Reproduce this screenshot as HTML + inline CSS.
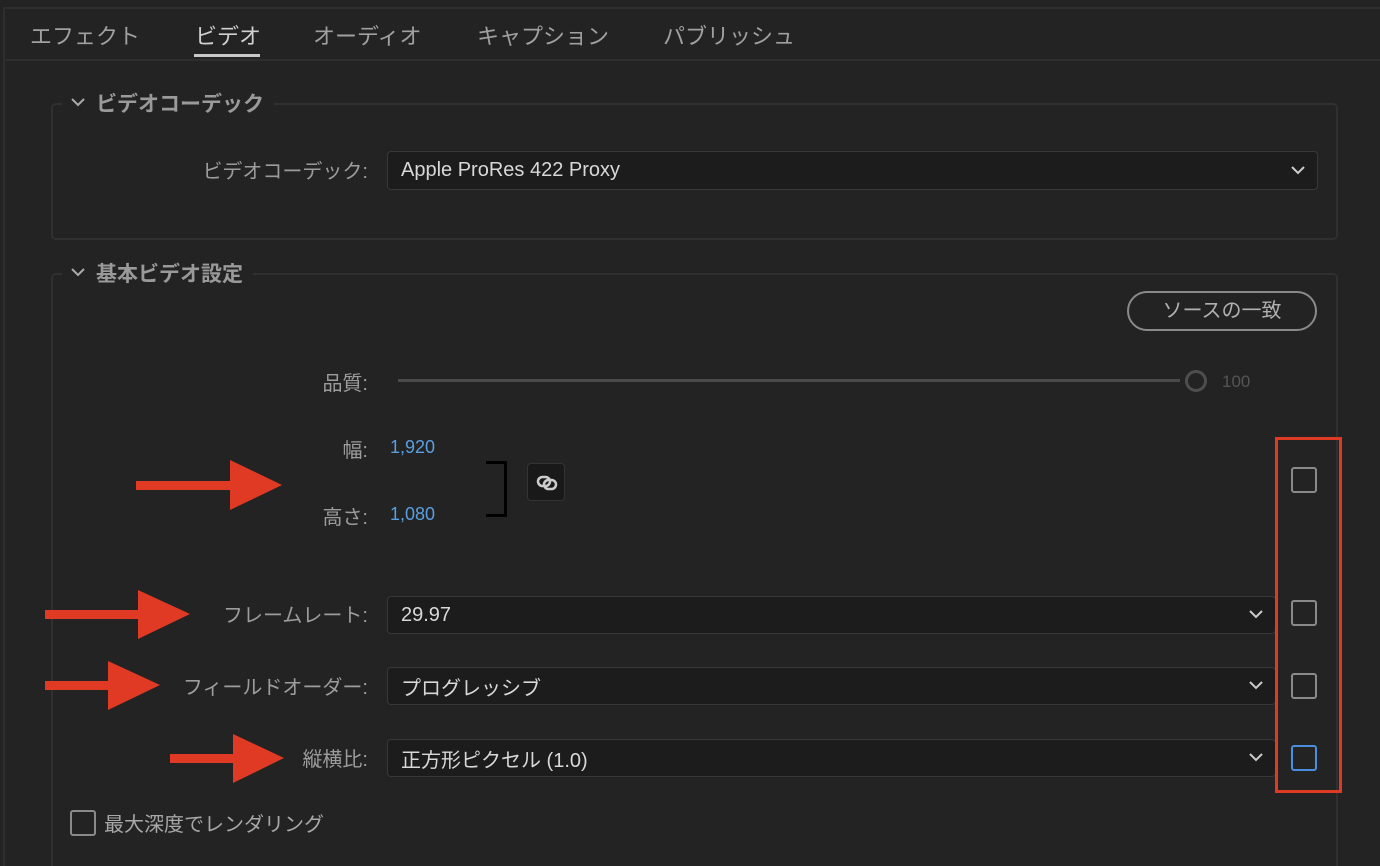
<!DOCTYPE html><html><head><meta charset="utf-8"><style>
html,body{margin:0;width:1380px;height:866px;overflow:hidden}
body{background:#232323;position:relative;font-family:"Liberation Sans","Noto Sans CJK JP",sans-serif;color:#a8a8a8}
.a{position:absolute}
.tab{position:absolute;top:19px;font-size:22px;color:#a0a0a0}
.lbl{position:absolute;right:1012px;font-size:20px;color:#9c9c9c;white-space:nowrap}
.dd{position:absolute;left:387px;background:#1c1c1c;border:1px solid #383838;border-radius:4px;box-sizing:border-box;font-size:20px;color:#d8d8d8;padding-left:13px;display:flex;align-items:center}
.dd svg{position:absolute;right:12px;top:50%;margin-top:-5px}
.cb{position:absolute;left:1291px;width:26px;height:26px;box-sizing:border-box;border:2.5px solid #8a8a8a;border-radius:3px}
.hd{position:absolute;font-size:21px;font-weight:bold;color:#9a9a9a;background:#232323;padding-right:10px;padding-left:34px}
.hd svg{position:absolute;left:8px;top:9px}
</style></head><body>
<div class="a" style="left:3px;top:7px;width:1377px;height:54px;border-top:2px solid #2e2e2e;border-bottom:2px solid #2e2e2e;border-left:2px solid #2e2e2e;box-sizing:border-box"></div>
<div class="a" style="left:3px;top:61px;width:2px;height:805px;background:#2e2e2e"></div>
<div class="tab" style="left:30px">エフェクト</div>
<div class="tab" style="left:195px;color:#d0d0d0">ビデオ</div>
<div class="a" style="left:194px;top:54px;width:66px;height:3px;background:#c8c8c8"></div>
<div class="tab" style="left:313px">オーディオ</div>
<div class="tab" style="left:477px">キャプション</div>
<div class="tab" style="left:663px">パブリッシュ</div>

<div class="a" style="left:51px;top:103px;width:1287px;height:137px;border:2px solid #303030;border-radius:5px;box-sizing:border-box"></div>
<div class="hd" style="left:62px;top:88px"><svg width="16" height="10"><path d="M2 2l6 6 6-6" stroke="#aaa" stroke-width="2" fill="none"/></svg>ビデオコーデック</div>
<div class="lbl" style="top:155px">ビデオコーデック:</div>
<div class="dd" style="top:151px;width:931px;height:39px">Apple ProRes 422 Proxy<svg width="14" height="9"><path d="M1 1l6 6 6-6" stroke="#ccc" stroke-width="2" fill="none"/></svg></div>

<div class="a" style="left:51px;top:273px;width:1287px;height:600px;border:2px solid #303030;border-radius:5px;box-sizing:border-box"></div>
<div class="hd" style="left:62px;top:258px"><svg width="16" height="10"><path d="M2 2l6 6 6-6" stroke="#aaa" stroke-width="2" fill="none"/></svg>基本ビデオ設定</div>
<div class="a" style="left:1127px;top:291px;width:190px;height:40px;border:2px solid #8a8a8a;border-radius:20px;box-sizing:border-box;font-size:20px;color:#b0b0b0;text-align:center;line-height:36px">ソースの一致</div>

<div class="lbl" style="top:367px">品質:</div>
<div class="a" style="left:398px;top:379px;width:782px;height:3px;background:#4a4a4a"></div>
<div class="a" style="left:1185px;top:370px;width:22px;height:22px;border:3px solid #4e4e4e;border-radius:50%;box-sizing:border-box"></div>
<div class="a" style="left:1222px;top:372px;font-size:17px;color:#555">100</div>

<div class="lbl" style="top:434px">幅:</div>
<div class="a" style="left:390px;top:437px;font-size:18px;color:#5a9fe0">1,920</div>
<div class="lbl" style="top:501px">高さ:</div>
<div class="a" style="left:390px;top:504px;font-size:18px;color:#5a9fe0">1,080</div>
<div class="a" style="left:486px;top:461px;width:18px;height:50px;border:3px solid #000;border-left:none;box-sizing:content-box"></div>
<div class="a" style="left:527px;top:463px;width:38px;height:38px;background:#191919;border:1px solid #333;border-radius:4px;box-sizing:border-box"><svg width="38" height="38"><rect x="10" y="13" width="12" height="9" rx="4.5" stroke="#ccc" stroke-width="2.5" fill="none"/><rect x="16" y="16" width="12" height="9" rx="4.5" stroke="#ccc" stroke-width="2.5" fill="none"/></svg></div>

<div class="lbl" style="top:599px">フレームレート:</div>
<div class="dd" style="top:596px;width:889px;height:38px">29.97<svg width="14" height="9"><path d="M1 1l6 6 6-6" stroke="#ccc" stroke-width="2" fill="none"/></svg></div>
<div class="lbl" style="top:671px">フィールドオーダー:</div>
<div class="dd" style="top:667px;width:889px;height:38px">プログレッシブ<svg width="14" height="9"><path d="M1 1l6 6 6-6" stroke="#ccc" stroke-width="2" fill="none"/></svg></div>
<div class="lbl" style="top:743px">縦横比:</div>
<div class="dd" style="top:739px;width:889px;height:38px">正方形ピクセル (1.0)<svg width="14" height="9"><path d="M1 1l6 6 6-6" stroke="#ccc" stroke-width="2" fill="none"/></svg></div>

<div class="cb" style="top:467px"></div>
<div class="cb" style="top:600px"></div>
<div class="cb" style="top:673px"></div>
<div class="cb" style="top:745px;border-color:#4a8ee0"></div>
<div class="a" style="left:1275px;top:437px;width:67px;height:356px;border:3px solid #e03a25;box-sizing:border-box"></div>

<div class="cb" style="left:70px;top:810px"></div>
<div class="a" style="left:104px;top:808px;font-size:20px;color:#a8a8a8">最大深度でレンダリング</div>

<svg class="a" style="left:0;top:0" width="1380" height="866">
<g fill="#e03a25">
<rect x="136" y="481" width="100" height="9"/><polygon points="230,460 282,485 230,510"/>
<rect x="45" y="610" width="100" height="9"/><polygon points="138,590 190,614 138,639"/>
<rect x="45" y="681" width="70" height="9"/><polygon points="108,661 160,685 108,710"/>
<rect x="170" y="754" width="70" height="9"/><polygon points="233,734 284,758 233,783"/>
</g></svg>
</body></html>
